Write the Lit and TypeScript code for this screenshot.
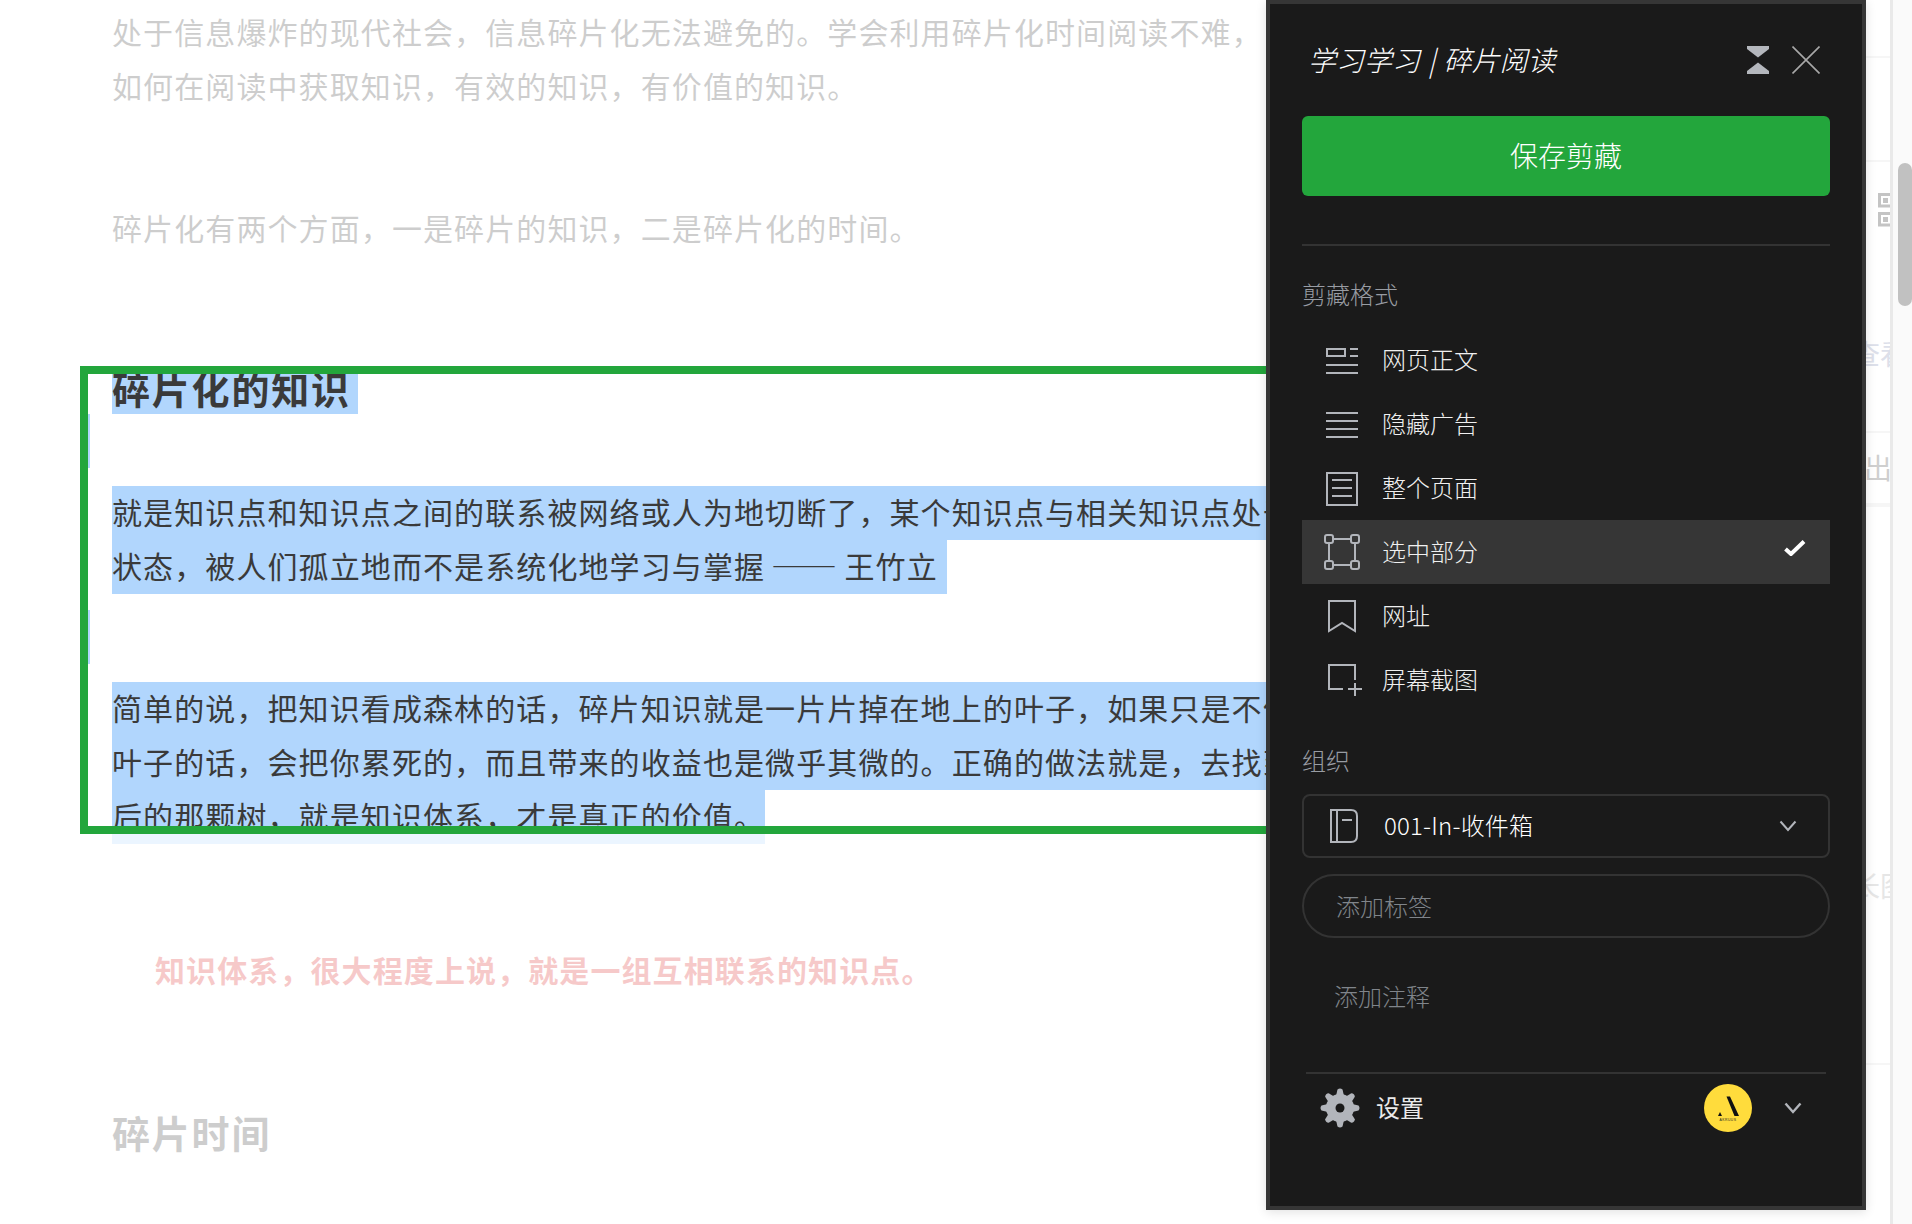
import { LitElement, html, css, svg } from "lit";
import { customElement } from "lit/decorators.js";

const rowIcons = [
  svg`<rect x="5" y="9" width="18" height="7"/><path d="M28 9H36M28 16H36M4 25H36M4 33H36"/>`,
  svg`<path d="M4 9H36M4 17H36M4 25H36M4 33H36"/>`,
  svg`<rect x="5" y="5" width="30" height="32"/><path d="M10 12H30M10 20H30M10 28H30"/>`,
  svg`<rect x="3" y="3" width="8" height="8" rx="2"/><rect x="29" y="3" width="8" height="8" rx="2"/><rect x="3" y="29" width="8" height="8" rx="2"/><rect x="29" y="29" width="8" height="8" rx="2"/><path d="M11 7H29M11 33H29M7 11V29M33 11V29"/>`,
  svg`<path d="M7 5H33V35L20 27L7 35Z"/>`,
  svg`<path d="M33 20V5H7V29H21M26 29H40M33 23V36"/>`,
];
const rows = ["网页正文", "隐藏广告", "整个页面", "选中部分", "网址", "屏幕截图"];

@customElement("app-root")
export class AppRoot extends LitElement {
  static styles = css`
    :host { display:block; position:relative; width:1912px; height:1224px; overflow:hidden; background:#fff;
      font-family:"Noto Sans CJK SC","Noto Sans",sans-serif; }
    .article { padding-left:112px; padding-top:6px; color:#3a3a3a; font-size:30px; line-height:54px; letter-spacing:1.1px; white-space:nowrap; overflow:hidden; height:1218px; }
    .line { height:54px; }
    .t { display:block; height:50px; line-height:50px; padding-bottom:4px; }
    .sel { display:block; width:fit-content; background:#b1d6fd; }
    .selwide { display:block; background:#b1d6fd; width:1300px; }
    .h { font-size:38px; font-weight:700; letter-spacing:1.8px; height:48px; line-height:44px; }
    .sel.hs { width:246px; height:48px; }
    .sel.end { width:835px; word-spacing:1.3px; }
    .dash { display:inline-block; font-feature-settings:"fwid"; transform:scaleX(1.1); }
    .blank { height:54px; width:2px; margin-left:-24px; background:#b1d6fd; }
    .red { color:#dc2b2b; font-weight:700; padding-left:43px; }
    .frame { position:absolute; left:80px; top:366px; width:1300px; height:468px; box-sizing:border-box; border:8px solid #23a63c; box-shadow:0 0 0 2000px rgba(255,255,255,.75); }
    .side { position:absolute; left:1866px; top:0; width:46px; height:1224px; background:#fff; overflow:hidden; }
    .rule { position:absolute; left:24px; top:0; width:3px; height:1224px; background:#e9e9e9; }
    .track { position:absolute; left:27px; top:0; width:19px; height:1224px; background:#fafafa; }
    .card-line { position:absolute; left:0; width:24px; height:2px; background:#f6f6f6; }
    .scroll { position:absolute; left:32px; top:163px; width:14px; height:143px; border-radius:7px; background:#c1c1c1; }
    .qr { position:absolute; left:12px; top:193px; }
    .ghost { position:absolute; font-size:28px; line-height:32px; white-space:nowrap; overflow:hidden; }
    .panel { position:absolute; left:1266px; top:0; width:600px; height:1210px; box-sizing:border-box; border:4px solid #363636; background:#1a1a1a; padding:0 32px; box-shadow:0 2px 10px rgba(0,0,0,.12); font-weight:300; }
    .head { display:flex; align-items:center; height:56px; padding:28px 10px 28px 6px; }
    .title { flex:1; font-size:28px; font-style:italic; color:#fff; white-space:pre; word-spacing:2px; padding-bottom:2px; }
    .hg { margin-right:23px; display:block; }
    .x { display:block; }
    .save { height:80px; box-sizing:border-box; padding-bottom:2px; background:#23a63c; border-radius:6px; color:#fff; font-size:28px; display:flex; align-items:center; justify-content:center; }
    .div { height:2px; background:#333; margin-top:48px; }
    .label { font-size:24px; line-height:34px; color:#989ca3; margin-top:31px; margin-bottom:17px; }
    .row { height:64px; display:flex; align-items:center; padding-left:20px; gap:20px; color:#f0f0f0; font-size:24px; }
    .row span { padding-bottom:4px; }
    .row.on { background:#363636; }
    .row svg.ic { fill:none; stroke:#b2b5bb; stroke-width:2; flex:none; }
    .check { margin-left:auto; margin-right:24px; margin-top:-8px; display:block; }
    .select { height:64px; box-sizing:border-box; border:2px solid #333; border-radius:8px; display:flex; align-items:center; padding:0 31px 0 26px; color:#fff; font-size:24px; }
    .select span { padding-bottom:4px; letter-spacing:.2px; }
    .select svg.bk { margin-right:26px; }
    .select .chev { margin-left:auto; }
    .tag { height:64px; margin-top:16px; box-sizing:border-box; border:2px solid #333; border-radius:32px; display:flex; align-items:center; padding-left:32px; padding-bottom:2px; color:#80858b; font-size:24px; }
    .note { margin-top:41px; padding-left:32px; font-size:24px; line-height:34px; color:#80858b; }
    .div2 { height:2px; background:#333; margin:59px 4px 0; }
    .foot { margin-top:10px; height:48px; display:flex; align-items:center; padding-left:18px; padding-right:28px; color:#eaeaea; font-size:24px; font-weight:400; }
    .foot .gear { margin-right:16px; }
    .foot span { padding-bottom:4px; }
    .foot .av { margin-left:auto; margin-right:32px; }
  `;

  render() {
    return html`
      <div class="article">
        <div class="line"><span class="t">处于信息爆炸的现代社会，信息碎片化无法避免的。学会利用碎片化时间阅读不难，</span></div>
        <div class="line"><span class="t">如何在阅读中获取知识，有效的知识，有价值的知识。</span></div>
        <div class="line" style="margin-top:88px"><span class="t">碎片化有两个方面，一是碎片的知识，二是碎片化的时间。</span></div>
        <div class="h" style="margin-top:110px"><span class="sel hs">碎片化的知识</span></div>
        <div class="blank"></div>
        <div class="line" style="margin-top:18px"><span class="selwide t">就是知识点和知识点之间的联系被网络或人为地切断了，某个知识点与相关知识点处于</span></div>
        <div class="line"><span class="sel end t">状态，被人们孤立地而不是系统化地学习与掌握 <span class="dash">——</span> 王竹立 </span></div>
        <div class="blank" style="margin-top:16px"></div>
        <div class="line" style="margin-top:18px"><span class="selwide t">简单的说，把知识看成森林的话，碎片知识就是一片片掉在地上的叶子，如果只是不停</span></div>
        <div class="line"><span class="selwide t">叶子的话，会把你累死的，而且带来的收益也是微乎其微的。正确的做法就是，去找到</span></div>
        <div class="line"><span class="sel t">后的那颗树，就是知识体系，才是真正的价值。</span></div>
        <div class="line red" style="margin-top:100px"><span class="t">知识体系，很大程度上说，就是一组互相联系的知识点。</span></div>
        <div class="h" style="margin-top:112px">碎片时间</div>
      </div>
      <div class="frame"></div>
      <div class="side">
        <div class="track"></div>
        <div class="card-line" style="top:56px"></div>
        <div class="card-line" style="top:160px"></div>
        <div class="card-line" style="top:431px"></div>
        <div class="card-line" style="top:503px;height:4px"></div>
        <div class="card-line" style="top:1063px"></div>
        <svg class="qr" width="12" height="34" viewBox="0 0 12 34" fill="none" stroke="#c4c4c4" stroke-width="3">
          <path d="M14 1.5H1.5V13H14M14 20.5H1.5V32H14"/><rect x="5" y="5" width="5" height="5" fill="#c4c4c4" stroke="none"/><rect x="5" y="24" width="5" height="5" fill="#c4c4c4" stroke="none"/>
        </svg>
        <div class="ghost" style="left:-14px;top:337px;width:38px;color:#dde0ea">查看</div>
        <div class="ghost" style="left:-2px;top:451px;color:#cfcfcf">出</div>
        <div class="ghost" style="left:-14px;top:869px;width:38px;color:#e6e6e6">长图</div>
        <div class="rule"></div>
        <div class="scroll"></div>
      </div>
      <div class="panel">
        <div class="head">
          <div class="title">学习学习 | 碎片阅读</div>
          <svg class="hg" width="22" height="28" viewBox="0 0 22 28" fill="#b4b7bd"><path d="M0 0H22V3L11 11.5L0 3Z"/><path d="M11 16.5L22 25V28H0V25Z"/></svg>
          <svg class="x" width="28" height="28" viewBox="0 0 28 28" stroke="#a8a8a8" stroke-width="1.6"><path d="M0.5 0.5L27.5 27.5M27.5 0.5L0.5 27.5"/></svg>
        </div>
        <div class="save">保存剪藏</div>
        <div class="div"></div>
        <div class="label">剪藏格式</div>
        ${rows.map((r, i) => html`<div class="row ${i === 3 ? "on" : ""}">
          <svg class="ic" width="40" height="40" viewBox="0 0 40 40">${rowIcons[i]}</svg>
          <span>${r}</span>
          ${i === 3 ? html`<svg class="check" width="22" height="16" viewBox="0 0 22 16" fill="none" stroke="#fff" stroke-width="4"><path d="M1.5 9L7 14L20 1.5"/></svg>` : ""}
        </div>`)}
        <div class="label">组织</div>
        <div class="select">
          <svg class="bk" width="28" height="34" viewBox="0 0 28 34" fill="none" stroke="#b2b5bb" stroke-width="2"><path d="M1 1H21Q27 1 27 7V27Q27 33 21 33H1ZM7 1V33M12 11H22"/></svg>
          <span>001-In-收件箱</span>
          <svg class="chev" width="18" height="12" viewBox="0 0 18 12" fill="none" stroke="#b2b5bb" stroke-width="2"><path d="M1.5 1.5L9 10L16.5 1.5"/></svg>
        </div>
        <div class="tag">添加标签</div>
        <div class="note">添加注释</div>
        <div class="div2"></div>
        <div class="foot">
          <svg class="gear" width="40" height="40" viewBox="0 0 40 40" fill="#b2b5bb">
            ${[0, 45, 90, 135, 180, 225, 270, 315].map((a) => svg`<path d="M15.5 10L17.5 1.5Q20 -0.5 22.5 1.5L24.5 10Z" transform="rotate(${a} 20 20)"/>`)}
            <circle cx="20" cy="20" r="14"/><circle cx="20" cy="20" r="4.5" fill="#1a1a1a"/>
          </svg>
          <span>设置</span>
          <svg class="av" width="48" height="48" viewBox="0 0 48 48">
            <circle cx="24" cy="24" r="24" fill="#ffdc3c"/>
            <path d="M22.5 12.5L26 12.5L35 32L30.5 32Z" fill="#111"/><path d="M14 32L16 28L18 32Z" fill="#111"/>
            <text x="24" y="36.5" text-anchor="middle" font-size="3.4" font-family="Liberation Sans" letter-spacing=".5" fill="#222">AKRUUS</text>
          </svg>
          <svg width="18" height="12" viewBox="0 0 18 12" fill="none" stroke="#b2b5bb" stroke-width="2.4"><path d="M1.5 1.5L9 10L16.5 1.5"/></svg>
        </div>
      </div>
    `;
  }
}
